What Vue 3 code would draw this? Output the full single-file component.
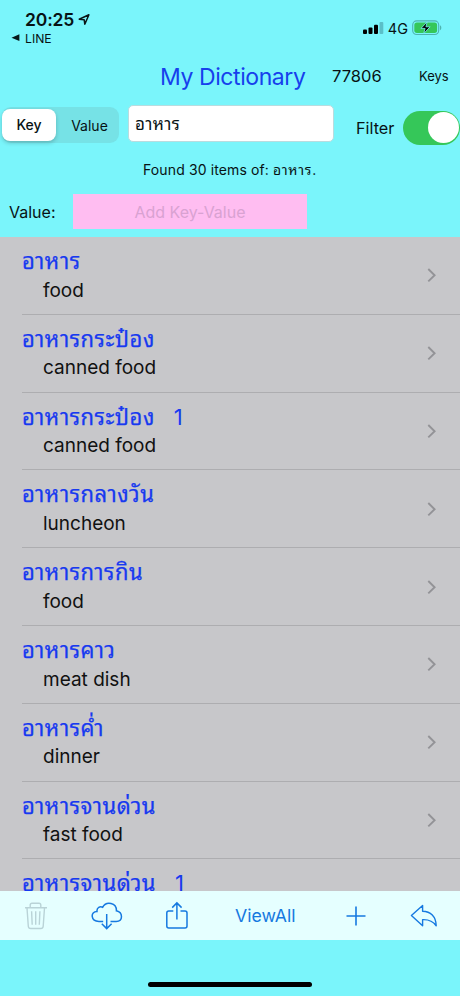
<script setup>
const rows = [
  { key: 'อาหาร', value: 'food' },
  { key: 'อาหารกระป๋อง', value: 'canned food' },
  { key: 'อาหารกระป๋อง', n: '1', value: 'canned food' },
  { key: 'อาหารกลางวัน', value: 'luncheon' },
  { key: 'อาหารการกิน', value: 'food' },
  { key: 'อาหารคาว', value: 'meat dish' },
  { key: 'อาหารค่ำ', value: 'dinner' },
  { key: 'อาหารจานด่วน', value: 'fast food' },
  { key: 'อาหารจานด่วน', n: '1' },
]
</script>

<template>
  <div class="screen">
    <header class="status">
      <div class="left">
        <div class="time">
          <span>20:25</span>
          <svg width="13" height="13" viewBox="0 0 13 13"><path d="M1.2 6.2 10.9 1.8 6.8 11.2 6.2 6.8Z" fill="none" stroke="#0a1416" stroke-width="1.5" stroke-linejoin="round" /></svg>
        </div>
        <div class="back">
          <svg width="9" height="8" viewBox="0 0 9 8"><path d="M.5 3.7 8.4 .3V7.1Z" fill="#06181a" /></svg>
          <span>LINE</span>
        </div>
      </div>
      <div class="right">
        <svg width="21" height="12" viewBox="0 0 21 12">
          <rect x="0" y="7.5" width="4" height="4.5" rx="1" />
          <rect x="5.5" y="5.5" width="4" height="6.5" rx="1" />
          <rect x="11" y="2.7" width="4" height="9.3" rx="1" />
          <rect x="16.5" y="0" width="3.8" height="12" rx="1" fill="#5abfc8" />
        </svg>
        <span class="net">4G</span>
        <svg width="30" height="16" viewBox="0 0 30 16">
          <rect x=".7" y=".9" width="26" height="13.6" rx="4" fill="none" stroke="#4eb4b0" stroke-width="1.1" />
          <rect x="2.3" y="2.5" width="22.8" height="10.4" rx="2.6" fill="#35c759" />
          <path d="M28 5.2v5c1.8-.7 1.8-4.3 0-5Z" fill="#4eb4b0" />
          <path d="M15.2 1.8 9 8.4h4.1l-1.4 5.2 6.4-6.8h-4.2Z" fill="#000" stroke="#7af5fb" stroke-width=".8" />
        </svg>
      </div>
    </header>

    <div class="titlebar">
      <h1>My Dictionary</h1>
      <span class="count">77806</span>
      <span class="keys">Keys</span>
    </div>

    <div class="search">
      <div class="segment"><span class="on">Key</span><span class="off">Value</span></div>
      <div class="field">อาหาร</div>
      <span class="filter">Filter</span>
      <div class="switch"><i></i></div>
    </div>

    <div class="found"><span>Found 30 items of: <b>อาหาร</b>.</span></div>

    <div class="valuebar">
      <span class="label">Value:</span>
      <div class="add"><span>Add Key-Value</span></div>
    </div>

    <main class="list">
      <div v-for="(r, i) in rows" :key="i" class="row">
        <div class="texts">
          <div class="key"><span class="thai">{{ r.key }}</span><span v-if="r.n" class="num">{{ r.n }}</span></div>
          <div v-if="r.value" class="value">{{ r.value }}</div>
        </div>
        <svg class="chev" width="10" height="16" viewBox="0 0 10 16"><path d="M1.3 2 7.6 8.2 1.3 14.4" fill="none" stroke="#939397" stroke-width="1.9" /></svg>
      </div>
    </main>

    <nav class="toolbar">
      <svg class="trash" width="24" height="28" viewBox="0 0 24 28" fill="none" stroke="#b9d3d7" stroke-width="1.4">
        <path d="M1 5.8H23M6.2 5.5V3Q6.2 1.2 8 1.2H15Q16.8 1.2 16.8 3V5.5M3 6l1.3 18.3Q4.5 26.5 6.7 26.5H16.8Q19 26.5 19.2 24.3L20.5 6M7.6 9.3 8.2 22.8M11.7 9.3V22.8M15.9 9.3 15.3 22.8" />
      </svg>
      <svg class="cloud" width="32" height="28" viewBox="0 0 32 28" fill="none" stroke="#1679e0" stroke-width="1.5">
        <path d="M12.2 19.4H8C-.6 19.4-.8 9.4 6 9.5 5.5 5.5 9.3 4 11.6 5.3 15.3-1.4 25.7.7 25.4 8.8 32.2 10.5 32.2 19.4 25.2 19.4H19.5M15.7 12V26.2M10.8 21.8 15.7 26.6 20.6 21.8" />
      </svg>
      <svg class="share" width="24" height="29" viewBox="0 0 24 29" fill="none" stroke="#1679e0" stroke-width="1.5">
        <path d="M8.3 10H3.8Q1.8 10 1.8 12V25Q1.8 27 3.8 27H20Q22 27 22 25V12Q22 10 20 10H15.5M11.9 18.5V2M7.2 6.6 11.9 1.9 16.6 6.6" />
      </svg>
      <span class="viewall">ViewAll</span>
      <svg class="plus" width="20" height="20" viewBox="0 0 20 20" fill="none" stroke="#1679e0" stroke-width="1.6"><path d="M.5 10H19.5M10 .5V19.5" /></svg>
      <svg class="reply" width="28" height="24" viewBox="0 0 28 24" fill="none" stroke="#1679e0" stroke-width="1.4" stroke-linejoin="round">
        <path d="M1.4 11.6 12.6 1.5V7.3C20.5 7.3 26 12.5 26.2 21.8 23.2 17.3 19.5 15.3 12.6 15.6V21.8Z" />
      </svg>
    </nav>
    <footer class="bottom"><div class="home"></div></footer>
  </div>
</template>

<style>
body { margin: 0; background: #7af5fb; }
</style>
<style scoped>
.screen { width: 460px; height: 996px; display: flex; flex-direction: column; overflow: hidden; background: #7af5fb; font-family: Inter, "Noto Sans Thai Looped", "Noto Looped Thai", Loma, Garuda, Waree, Laksaman, Sarabun, "Tlwg Typo", Norasi, Kinnari, FreeSans, FreeSerif, "Noto Serif Thai", "Noto Sans Thai", sans-serif; color: #071214; white-space: nowrap; }
.status { height: 56px; flex: none; display: flex; justify-content: space-between; }
.left { padding: 9px 0 0 11px; }
.time { display: flex; align-items: center; gap: 4px; height: 21px; padding-left: 14px; font-size: 17.5px; font-weight: 600; }
.time span { letter-spacing: -.15px; }
.back { display: flex; align-items: center; gap: 5px; height: 16px; font-size: 12.2px; }
.right { display: flex; align-items: center; height: 16px; padding: 20px 18px 0 0; }
.net { font-size: 14.5px; font-weight: 400; margin: 0 4px 0 4px; }
.titlebar { height: 42px; flex: none; display: flex; align-items: center; }
h1 { margin: -1px 0 0 160px; width: 172px; font-size: 23px; letter-spacing: -.42px; font-weight: 400; color: #1740ec; }
.count { width: 87px; margin-top: -2px; font-size: 16.5px; }
.keys { margin-top: -2px; font-size: 13px; }
.search { height: 55px; flex: none; display: flex; align-items: center; }
.segment { width: 117px; height: 36px; margin: -1px 0 0 2px; display: flex; border-radius: 9px; background: #76e2e6; font-size: 14px; align-items: center; }
.on { width: 54px; height: 32px; line-height: 32px; text-align: center; background: #fff; border-radius: 8px; box-shadow: 0 2px 4px #0003; font-weight: 500; }
.off { flex: 1; padding-left: 4px; text-align: center; }
.field { width: 206px; height: 37px; line-height: 36px; box-sizing: border-box; margin: -4px 0 0 9px; padding-left: 6px; background: #fff; border: 1px solid #b9dcdf; border-radius: 5px; font-size: 17px; letter-spacing: .4px; }
.filter { margin: 4px 0 0 22px; width: 47px; font-size: 16.2px; }
.switch { width: 57px; height: 34px; margin-top: 4px; border-radius: 17px; background: #35c759; flex: none; display: flex; justify-content: flex-end; align-items: center; }
.switch i { width: 31px; height: 31px; margin-right: 1.5px; border-radius: 50%; background: #fff; }
.found { height: 31px; padding-bottom: 2px; flex: none; display: flex; align-items: center; padding-left: 143px; font-size: 14px; letter-spacing: .12px; }
.found b { font-weight: 400; letter-spacing: .7px; }
.valuebar { height: 51px; flex: none; display: flex; align-items: center; }
.label { width: 64px; padding-left: 9px; font-size: 16px; }
.add { width: 234px; height: 35px; display: flex; align-items: center; justify-content: center; background: #ffbdf1; color: #d9a2d2; font-size: 16px; }
.list { height: 654px; flex: none; overflow: hidden; background: #c7c7ca; }
.row { height: 77.8px; box-sizing: border-box; margin-left: 22px; padding-right: 23px; display: flex; align-items: center; justify-content: space-between; border-bottom: 1px solid #adadb0; }
.texts { height: 100%; }
.key { height: 32px; padding-top: 8px; line-height: 32px; display: flex; font-size: 22px; color: #1739f0; }
.thai { letter-spacing: .5px; -webkit-text-stroke: .25px #1739f0; }
.num { margin-left: 19px; }
.value { margin-top: -2.4px; line-height: 32px; padding-left: 21px; font-size: 19px; color: #111; }
.toolbar { height: 49px; flex: none; display: flex; align-items: center; background: #e5ffff; }
.trash { margin-left: 24px; }
.cloud { margin-left: 43px; }
.share { margin-left: 42px; }
.viewall { width: 62px; margin-left: 46px; font-size: 17.7px; color: #1679e0; }
.plus { margin-left: 49px; }
.reply { margin-left: 44px; }
.bottom { flex: 1; display: flex; justify-content: center; align-items: flex-start; padding-top: 42px; box-sizing: border-box; }
.home { width: 164px; height: 5px; border-radius: 3px; background: #000; }
</style>
